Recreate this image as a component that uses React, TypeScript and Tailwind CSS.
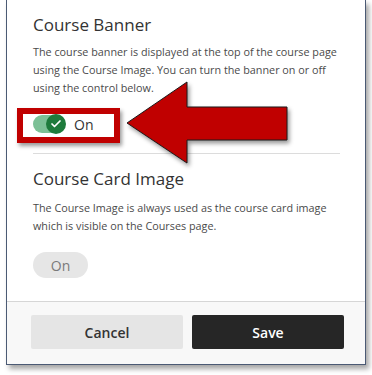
import { Check } from 'lucide-react'

const font = { fontFamily: '"Open Sans", "Noto Sans", sans-serif' }

const Arrow = () => (
  <svg
    className="absolute left-0 top-0 pointer-events-none"
    width="372"
    height="375"
    viewBox="0 0 372 375"
  >
    <defs>
      <filter id="arrowShadow" x="-20%" y="-20%" width="140%" height="140%">
        <feDropShadow dx="2" dy="3" stdDeviation="2" floodColor="#000" floodOpacity="0.4" />
      </filter>
    </defs>
    <polygon
      points="127,123 187,82 187,107 287,107 287,140 187,140 187,163"
      fill="#c00000"
      stroke="#1a1a1a"
      strokeWidth="1"
      strokeLinejoin="miter"
      filter="url(#arrowShadow)"
    />
  </svg>
)

export default function App() {
  return (
    <div className="relative w-[372px] h-[375px] bg-white overflow-hidden" style={font}>
      <div className="ml-[6px] w-[360px] h-[365px] flex flex-col bg-white border-x border-b border-[#4b5a74] shadow-[3px_4px_5px_rgba(0,0,0,0.35)]">
        <div className="flex-1 pl-[26px] pr-[25px] pt-[13px]">
          <h2 className="text-[17px] leading-[24px] text-[#333333]">Course Banner</h2>
          <p className="mt-[6px] mr-[-10px] text-[10.8px] leading-[18px] text-[#4a4a4a]">
            The course banner is displayed at the top of the course page using the Course Image. You can turn the banner on or off using the control below.
          </p>
          <div className="mt-[15px] h-[24px] flex items-center gap-[9px]">
            <div className="relative w-[32px] h-[18px] rounded-full bg-[#7cc096]">
              <div className="absolute right-[-1px] top-[-1px] w-[20px] h-[20px] rounded-full bg-[#1e7b3c] flex items-center justify-center">
                <Check className="w-[12px] h-[12px] text-white" strokeWidth={3.5} />
              </div>
            </div>
            <span className="text-[14px] text-[#333333]">On</span>
          </div>
          <div className="mt-[17px] h-px bg-[#dcdcdc]" />
          <h2 className="mt-[13px] text-[17px] leading-[24px] text-[#333333]">Course Card Image</h2>
          <p className="mt-[8px] text-[10.8px] leading-[18px] text-[#4a4a4a]">
            The Course Image is always used as the course card image which is visible on the Courses page.
          </p>
          <div className="mt-[17px] w-[55px] h-[26px] rounded-full bg-[#e6e6e6] flex items-center justify-center text-[14px] text-[#7a7a7a]">
            On
          </div>
        </div>
        <div className="h-[63px] border-t border-[#d6d6d6] bg-[#f8f8f8] pl-[24px] pr-[21px] pt-[13px] flex gap-[9px]">
          <button className="w-[152px] h-[34px] rounded-[2px] bg-[#e5e5e5] text-[14px] font-semibold text-[#333333]">
            Cancel
          </button>
          <button className="w-[152px] h-[34px] rounded-[2px] bg-[#262626] text-[14px] font-semibold text-white">
            Save
          </button>
        </div>
      </div>

      <div className="absolute left-[17px] top-[108px] w-[103px] h-[35px] border-[6px] border-[#c00000] shadow-[2px_3px_4px_rgba(0,0,0,0.4)]" />
      <Arrow />
    </div>
  )
}
